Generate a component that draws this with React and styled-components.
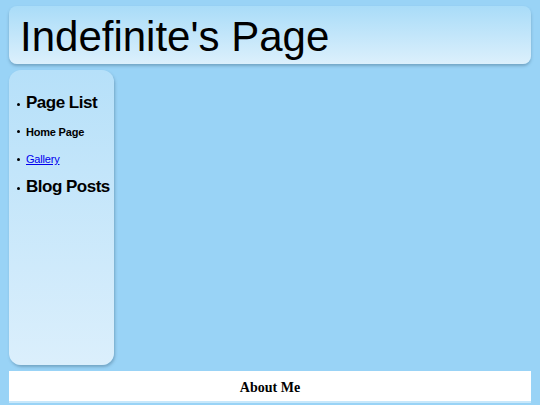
import styled, { createGlobalStyle } from "styled-components";

const GlobalStyle = createGlobalStyle`
  html, body {
    margin: 0;
    padding: 0;
    background-color: #99d3f6;
    font-family: "Liberation Sans", Arial, sans-serif;
  }
`;

const Page = styled.div`
  width: 540px;
  height: 405px;
  box-sizing: border-box;
  padding: 6px 9px 0 9px;
  display: flex;
  flex-direction: column;
  overflow: hidden;
`;

const Header = styled.div`
  height: 58px;
  box-sizing: border-box;
  border-radius: 8px;
  background: linear-gradient(to bottom, #a9dcf8, #dcf0fc);
  box-shadow: 0 2px 3px rgba(70, 110, 140, 0.45);
  padding-left: 11px;
  display: flex;
  align-items: center;
`;

const Title = styled.h1`
  margin: 0;
  font-size: 42px;
  font-weight: normal;
  color: #000;
  line-height: 1;
  padding-top: 3px;
`;

const Middle = styled.div`
  display: flex;
  margin-top: 6px;
`;

const Sidebar = styled.div`
  width: 105px;
  height: 295px;
  box-sizing: border-box;
  border-radius: 12px;
  background: linear-gradient(to bottom, #b6e0f9, #dbeffc);
  box-shadow: 1px 2px 3px rgba(70, 110, 140, 0.45);
  padding-top: 21px;
`;

const List = styled.ul`
  margin: 0;
  padding: 0 0 0 8px;
  list-style: none;
  display: flex;
  flex-direction: column;
`;

const Item = styled.li`
  display: flex;
  align-items: center;
  gap: 6px;
  height: ${(p) => p.$h}px;
  font-size: ${(p) => (p.$big ? 17 : 11)}px;
  letter-spacing: ${(p) => (p.$big ? -0.5 : -0.2)}px;
  font-weight: ${(p) => (p.$bold ? "bold" : "normal")};
  color: #000;
  white-space: nowrap;

  &::before {
    content: "";
    width: 3px;
    height: 3px;
    border-radius: 50%;
    background: #000;
    flex: none;
    margin-top: ${(p) => (p.$big ? 3 : 0)}px;
  }
`;

const Link = styled.a`
  color: #0000ee;
  text-decoration: underline;
`;

const Footer = styled.div`
  margin-top: 6px;
  height: 32px;
  padding-top: 4px;
  box-sizing: border-box;
  background: #fff;
  border-bottom: 2px solid #c8e8fb;
  display: flex;
  align-items: center;
  justify-content: center;
  font-family: "Liberation Serif", "Times New Roman", serif;
  font-weight: bold;
  font-size: 14px;
  color: #000;
`;

export default function App() {
  return (
    <>
      <GlobalStyle />
      <Page>
        <Header>
          <Title>Indefinite's Page</Title>
        </Header>
        <Middle>
          <Sidebar>
            <List>
              <Item $h={24} $big $bold>Page List</Item>
              <Item $h={33} $bold>Home Page</Item>
              <Item $h={22}>
                <Link href="#">Gallery</Link>
              </Item>
              <Item $h={33} $big $bold>Blog Posts</Item>
            </List>
          </Sidebar>
        </Middle>
        <Footer>About Me</Footer>
      </Page>
    </>
  );
}
